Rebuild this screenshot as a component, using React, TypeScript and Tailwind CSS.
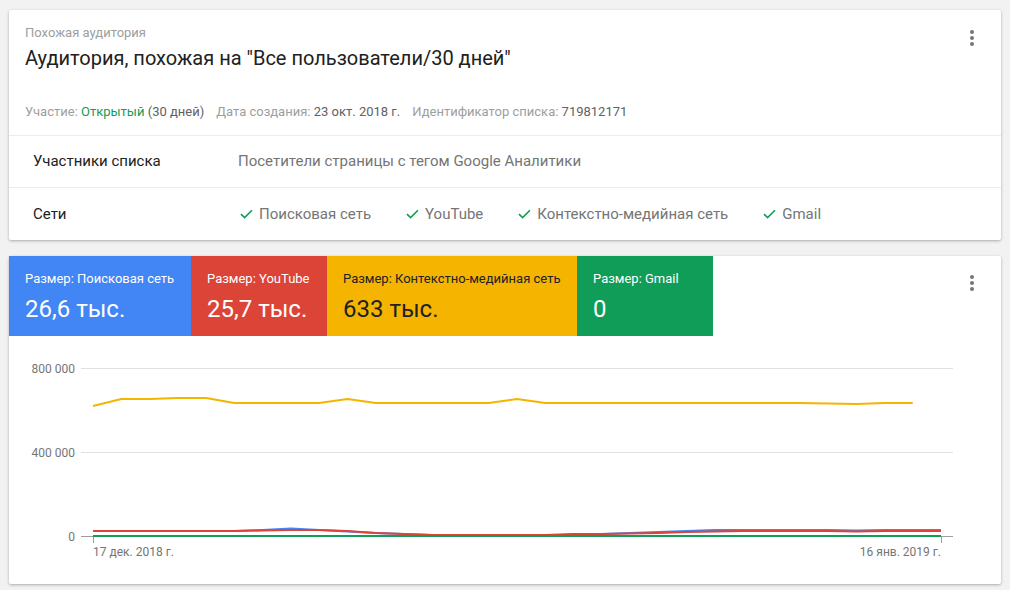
import React from "react";

const X0 = 93 - 9;
const STEP = 848 / 30;
const Y0 = 336;

const yellow = [406, 399, 399, 398, 398, 403, 403, 403, 403, 399, 403, 403, 403, 403, 403, 399, 403, 403, 403, 403, 403, 403, 403, 403, 403, 403, 403.5, 404, 403, 403];
const red = [531, 531, 531, 531, 531, 531, 530.5, 530, 530, 531, 533, 534, 535, 535, 535, 535, 535, 534, 534, 533.5, 533, 532, 531.5, 531, 531, 531, 531, 531.5, 531, 531, 531];
const blue = [531, 531, 531, 531, 531, 531, 530, 528.5, 530, 531.5, 533, 534, 535, 535, 535, 535, 535.5, 534.5, 534, 533, 532, 531, 530, 530, 530, 530, 530, 530.5, 530, 530, 530];

function pts(arr: number[]) {
  return arr.map((y, i) => `${(X0 + i * STEP).toFixed(1)},${(y - Y0).toFixed(1)}`).join(" ");
}

function Kebab() {
  return (
    <svg width="24" height="24" viewBox="0 0 24 24" className="shrink-0">
      <circle cx="12" cy="6" r="2" fill="#757575" />
      <circle cx="12" cy="12" r="2" fill="#757575" />
      <circle cx="12" cy="18" r="2" fill="#757575" />
    </svg>
  );
}

function Check() {
  return (
    <svg width="13" height="10" viewBox="0 0 13 10" className="shrink-0">
      <path d="M1 5.2 L4.6 8.6 L12 1.2" fill="none" stroke="#0f9d58" strokeWidth="1.6" />
    </svg>
  );
}

function Tile({ bg, label, value, w, dark }: { bg: string; label: string; value: string; w: string; dark?: boolean }) {
  return (
    <div className={`${bg} ${w} h-[80px] pl-4 pt-[15px] ${dark ? "text-[#202124]" : "text-white"}`}>
      <div className="text-[13px] leading-4">{label}</div>
      <div className="text-[24px] leading-7 mt-[8px]">{value}</div>
    </div>
  );
}

export default function App() {
  const nets = ["Поисковая сеть", "YouTube", "Контекстно-медийная сеть", "Gmail"];
  return (
    <div className="w-[1010px] h-[590px] bg-[#f2f2f2] pt-[10px] pl-[9px] overflow-hidden" style={{ fontFamily: "Roboto, 'Noto Sans', sans-serif" }}>
      <div className="w-[992px] bg-white rounded-[2px] shadow-[0_1px_3px_rgba(0,0,0,0.3)]">
        <div className="flex justify-between pl-4 pr-[17px] pt-[15px] pb-[15px] h-[126px] border-b border-[#ececec]">
          <div className="flex flex-col">
            <div className="text-[13px] leading-4 text-[#9e9e9e]">Похожая аудитория</div>
            <div className="text-[20px] leading-7 text-[#212121] mt-[3px]">Аудитория, похожая на "Все пользователи/30 дней"</div>
            <div className="mt-auto text-[13px] leading-4 text-[#9e9e9e] flex gap-3">
              <span>Участие: <span className="text-[#0f9d58]">Открытый</span> <span className="text-[#616161]">(30 дней)</span></span>
              <span>Дата создания: <span className="text-[#616161]">23 окт. 2018 г.</span></span>
              <span>Идентификатор списка: <span className="text-[#616161]">719812171</span></span>
            </div>
          </div>
          <div className="pt-[1px]"><Kebab /></div>
        </div>
        <div className="flex items-center h-[52px] pl-6 border-b border-[#ececec] text-[15px]">
          <div className="w-[205px] text-[#212121]">Участники списка</div>
          <div className="text-[#757575]">Посетители страницы с тегом Google Аналитики</div>
        </div>
        <div className="flex items-center h-[52px] pl-6 text-[15px]">
          <div className="w-[207px] text-[#212121]">Сети</div>
          <div className="flex gap-[35px] text-[#757575]">
            {nets.map((n) => (
              <div key={n} className="flex items-center gap-[6px]">
                <Check />
                <span>{n}</span>
              </div>
            ))}
          </div>
        </div>
      </div>

      <div className="w-[992px] h-[328px] mt-4 bg-white rounded-[2px] shadow-[0_1px_3px_rgba(0,0,0,0.3)] flex flex-col">
        <div className="flex justify-between h-[80px]">
          <div className="flex">
            <Tile bg="bg-[#4285f4]" w="w-[182px]" label="Размер: Поисковая сеть" value="26,6 тыс." />
            <Tile bg="bg-[#db4437]" w="w-[136px]" label="Размер: YouTube" value="25,7 тыс." />
            <Tile bg="bg-[#f4b400]" w="w-[250px]" label="Размер: Контекстно-медийная сеть" value="633 тыс." dark />
            <Tile bg="bg-[#0f9d58]" w="w-[136px]" label="Размер: Gmail" value="0" />
          </div>
          <div className="pt-[15px] pr-[17px]"><Kebab /></div>
        </div>
        <svg width="992" height="248" className="block">
          <line x1="72" y1="32.5" x2="944" y2="32.5" stroke="#e0e0e0" strokeWidth="1" />
          <line x1="72" y1="116.5" x2="944" y2="116.5" stroke="#e0e0e0" strokeWidth="1" />
          <line x1="72" y1="200.5" x2="944" y2="200.5" stroke="#9e9e9e" strokeWidth="1" />
          <line x1="84.5" y1="200" x2="84.5" y2="207" stroke="#9e9e9e" strokeWidth="1" />
          <line x1="932.5" y1="200" x2="932.5" y2="207" stroke="#9e9e9e" strokeWidth="1" />
          <g fontSize="12" fill="#757575" style={{ fontFamily: "Roboto, sans-serif" }}>
            <text x="66" y="36.5" textAnchor="end">800 000</text>
            <text x="66" y="120.5" textAnchor="end">400 000</text>
            <text x="66" y="204.5" textAnchor="end">0</text>
            <text x="84" y="219.5">17 дек. 2018 г.</text>
            <text x="932" y="219.5" textAnchor="end">16 янв. 2019 г.</text>
          </g>
          <polyline points={pts(yellow)} fill="none" stroke="#f4b400" strokeWidth="2" strokeLinejoin="round" />
          <polyline points={pts(blue)} fill="none" stroke="#4285f4" strokeWidth="2" strokeLinejoin="round" />
          <polyline points={pts(red)} fill="none" stroke="#db4437" strokeWidth="2" strokeLinejoin="round" />
          <line x1={X0} y1="200" x2={X0 + 848} y2="200" stroke="#0f9d58" strokeWidth="2" />
        </svg>
      </div>
    </div>
  );
}
